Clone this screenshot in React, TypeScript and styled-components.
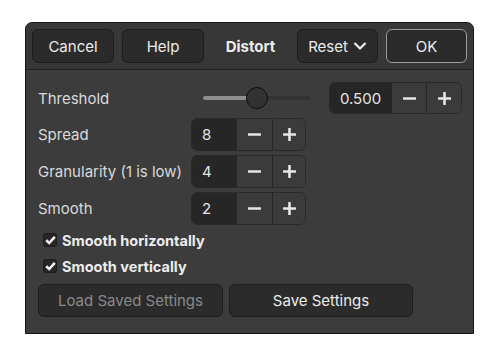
import React from 'react';
import styled, { createGlobalStyle } from 'styled-components';

const GlobalStyle = createGlobalStyle`
  html, body {
    margin: 0;
    padding: 0;
    background: #ffffff;
    font-family: Inter, "Noto Sans", "DejaVu Sans", sans-serif;
  }
`;

const Page = styled.div`
  padding: 22px 0 0 25px;
`;

const Dialog = styled.div`
  width: 449px;
  height: 312px;
  box-sizing: border-box;
  border: 1px solid #151515;
  border-radius: 7px 7px 0 0;
  background: #3c3c3c;
  overflow: hidden;
  display: flex;
  flex-direction: column;
`;

const Header = styled.div`
  height: 47px;
  box-sizing: border-box;
  padding: 6px 6px 0 6px;
  display: flex;
  align-items: flex-start;
  gap: 8px;
  background: #373737;
  border-bottom: 1px solid #222222;
`;

const Button = styled.button<{ $width: number; $height?: number; $default?: boolean }>`
  width: ${p => p.$width}px;
  height: ${p => p.$height ?? 34}px;
  box-sizing: border-box;
  border-radius: 6px;
  border: 1px solid ${p => (p.$default ? '#9c9c9c' : '#1e1e1e')};
  background: #2b2b2b;
  color: ${p => (p.disabled ? '#8a8a8a' : '#ececec')};
  font-family: inherit;
  font-size: 15px;
  display: flex;
  align-items: center;
  justify-content: center;
  gap: 5px;
  padding: 0;
`;

const Title = styled.div`
  flex: 1;
  text-align: center;
  color: #ececec;
  font-weight: 700;
  font-size: 15px;
  line-height: 35px;
`;

const Body = styled.div`
  flex: 1;
  padding: 12px 0 0 12px;
  display: flex;
  flex-direction: column;
`;

const Grid = styled.div`
  display: grid;
  grid-template-columns: 153px auto;
  grid-template-rows: 32px 33px 33px 33px;
  row-gap: 4px;
  align-items: center;
`;

const Label = styled.div`
  color: #dadada;
  font-size: 15px;
`;

const SliderRow = styled.div`
  display: flex;
  align-items: center;
  padding-left: 12px;
  gap: 19px;
`;

const Track = styled.div`
  position: relative;
  width: 107px;
  height: 4px;
  border-radius: 2px;
  background: #333333;
`;

const TrackFill = styled.div`
  position: absolute;
  left: 0;
  top: 0;
  bottom: 0;
  border-radius: 2px;
  background: #8e8e8e;
`;

const Thumb = styled.div`
  position: absolute;
  top: 50%;
  width: 22px;
  height: 22px;
  margin: -11px 0 0 -11px;
  box-sizing: border-box;
  border-radius: 50%;
  background: #323232;
  border: 1px solid #0e0e0e;
`;

const Spin = styled.div<{ $height: number }>`
  display: flex;
  height: ${p => p.$height}px;
  box-sizing: border-box;
  border: 1px solid #2a2a2a;
  border-radius: 6px;
  overflow: hidden;
  width: max-content;
`;

const SpinValue = styled.div<{ $width: number; $center?: boolean }>`
  width: ${p => p.$width}px;
  background: #262626;
  color: #e4e4e4;
  font-size: 15px;
  display: flex;
  align-items: center;
  justify-content: ${p => (p.$center ? 'center' : 'flex-start')};
  padding-left: ${p => (p.$center ? 0 : 10)}px;
  box-sizing: border-box;
`;

const SpinButton = styled.div<{ $width: number }>`
  width: ${p => p.$width}px;
  box-sizing: border-box;
  background: #3b3b3b;
  border-left: 1px solid #252525;
  display: flex;
  align-items: center;
  justify-content: center;
`;

const Checks = styled.div`
  display: flex;
  flex-direction: column;
  margin-top: 2px;
`;

const CheckRow = styled.div`
  height: 26px;
  display: flex;
  align-items: center;
  gap: 5px;
  padding-left: 5px;
  color: #ececec;
  font-weight: 700;
  font-size: 14.5px;
`;

const CheckBox = styled.div`
  width: 14px;
  height: 14px;
  box-sizing: border-box;
  border-radius: 3px;
  background: #262626;
  border: 1px solid #1c1c1c;
  display: flex;
  align-items: center;
  justify-content: center;
`;

const Actions = styled.div`
  display: flex;
  gap: 6px;
  margin-top: 5px;
`;

const Minus = () => (
  <svg width="15" height="15" viewBox="0 0 15 15">
    <rect x="1" y="6.2" width="13" height="2.6" rx="0.6" fill="#e6e6e6" />
  </svg>
);

const Plus = () => (
  <svg width="15" height="15" viewBox="0 0 15 15">
    <rect x="1" y="6.2" width="13" height="2.6" rx="0.6" fill="#e6e6e6" />
    <rect x="6.2" y="1" width="2.6" height="13" rx="0.6" fill="#e6e6e6" />
  </svg>
);

const Chevron = () => (
  <svg width="14" height="10" viewBox="0 0 14 10">
    <path d="M1.5 2 L7 7.5 L12.5 2" fill="none" stroke="#ececec" strokeWidth="2.2" />
  </svg>
);

const Check = () => (
  <svg width="11" height="10" viewBox="0 0 11 10">
    <path d="M1.2 5.2 L4.2 8 L9.8 1.8" fill="none" stroke="#f2f2f2" strokeWidth="2.6" />
  </svg>
);

const SpinBox: React.FC<{ value: string; widths: [number, number, number]; height: number; center?: boolean }> = ({
  value,
  widths,
  height,
  center
}) => (
  <Spin $height={height}>
    <SpinValue $width={widths[0]} $center={center}>{value}</SpinValue>
    <SpinButton $width={widths[1]}>
      <Minus />
    </SpinButton>
    <SpinButton $width={widths[2]}>
      <Plus />
    </SpinButton>
  </Spin>
);

const rows = [
  { label: 'Spread', value: '8' },
  { label: 'Granularity (1 is low)', value: '4' },
  { label: 'Smooth', value: '2' }
];

export default function App() {
  const threshold = 0.5;
  return (
    <Page>
      <GlobalStyle />
      <Dialog>
        <Header>
          <Button $width={82}>Cancel</Button>
          <Button $width={82}>Help</Button>
          <Title>Distort</Title>
          <Button $width={81}>
            Reset <Chevron />
          </Button>
          <Button $width={81} $default>
            OK
          </Button>
        </Header>
        <Body>
          <Grid>
            <Label>Threshold</Label>
            <SliderRow>
              <Track>
                <TrackFill style={{ width: `${threshold * 100}%` }} />
                <Thumb style={{ left: `${threshold * 100}%` }} />
              </Track>
              <SpinBox value="0.500" widths={[61, 35, 35]} height={32} center />
            </SliderRow>
            {rows.map(r => (
              <React.Fragment key={r.label}>
                <Label>{r.label}</Label>
                <SpinBox value={r.value} widths={[44, 36, 33]} height={33} />
              </React.Fragment>
            ))}
          </Grid>
          <Checks>
            <CheckRow>
              <CheckBox>
                <Check />
              </CheckBox>
              Smooth horizontally
            </CheckRow>
            <CheckRow>
              <CheckBox>
                <Check />
              </CheckBox>
              Smooth vertically
            </CheckRow>
          </Checks>
          <Actions>
            <Button $width={185} $height={33} disabled>
              Load Saved Settings
            </Button>
            <Button $width={184} $height={33}>
              Save Settings
            </Button>
          </Actions>
        </Body>
      </Dialog>
    </Page>
  );
}
